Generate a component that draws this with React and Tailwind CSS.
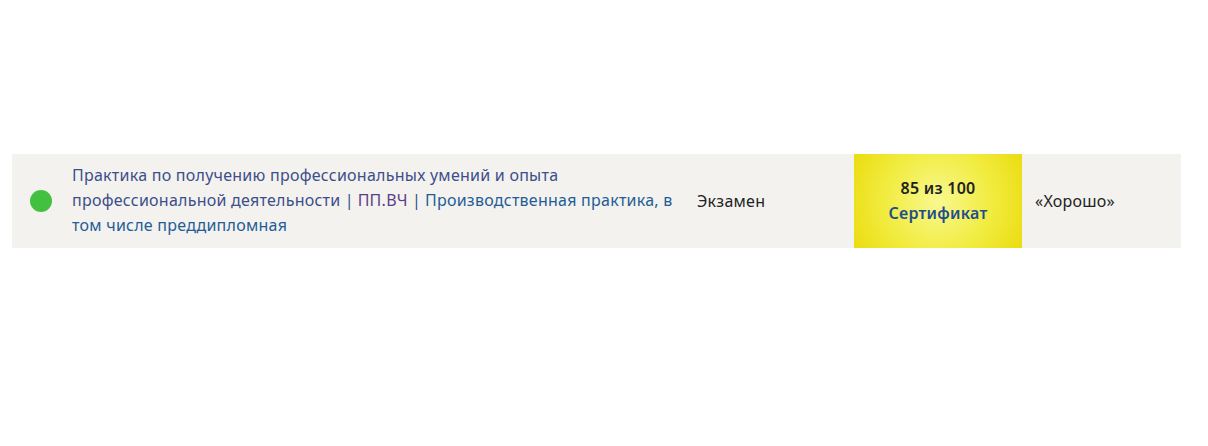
export default function App() {
  return (
    <div className="w-[1208px] h-[446px] bg-white pt-[154px] px-[12px]" style={{ fontFamily: '"Noto Sans", "Open Sans", sans-serif' }}>
      <div className="flex w-[1169px] h-[94px] bg-[#f3f2ef] text-[16px] leading-[25px] tracking-[0.25px]">
        <div className="w-[60px] flex items-center pl-[18px]">
          <div className="w-[22px] h-[22px] rounded-full bg-[#44c040]" />
        </div>
        <div className="w-[613px] flex items-center pr-[4px] text-[#245d96]">
          <div className="-mt-[1px]">
            <a className="text-[#3d4e8a]">Практика по получению профессиональных умений и опыта профессиональной деятельности</a>
            <span className="text-[#2b4f85] tracking-normal"> | </span>
            <span className="text-[#5a3f86]">ПП.ВЧ</span>
            <span className="text-[#2b4f85] tracking-normal"> | </span>
            <span>Производственная практика, в том числе преддипломная</span>
          </div>
        </div>
        <div className="w-[169px] flex items-center pl-[12px] text-[#222]">Экзамен</div>
        <div className="w-[168px] flex flex-col items-center justify-center bg-[radial-gradient(circle,#f8f890_0%,#f1ec40_55%,#ebdc10_100%)]">
          <div className="font-semibold text-[#222]">85 из 100</div>
          <div className="font-semibold text-[#1f4e8c]">Сертификат</div>
        </div>
        <div className="flex-1 flex items-center pl-[13px] text-[#222]">«Хорошо»</div>
      </div>
    </div>
  );
}
